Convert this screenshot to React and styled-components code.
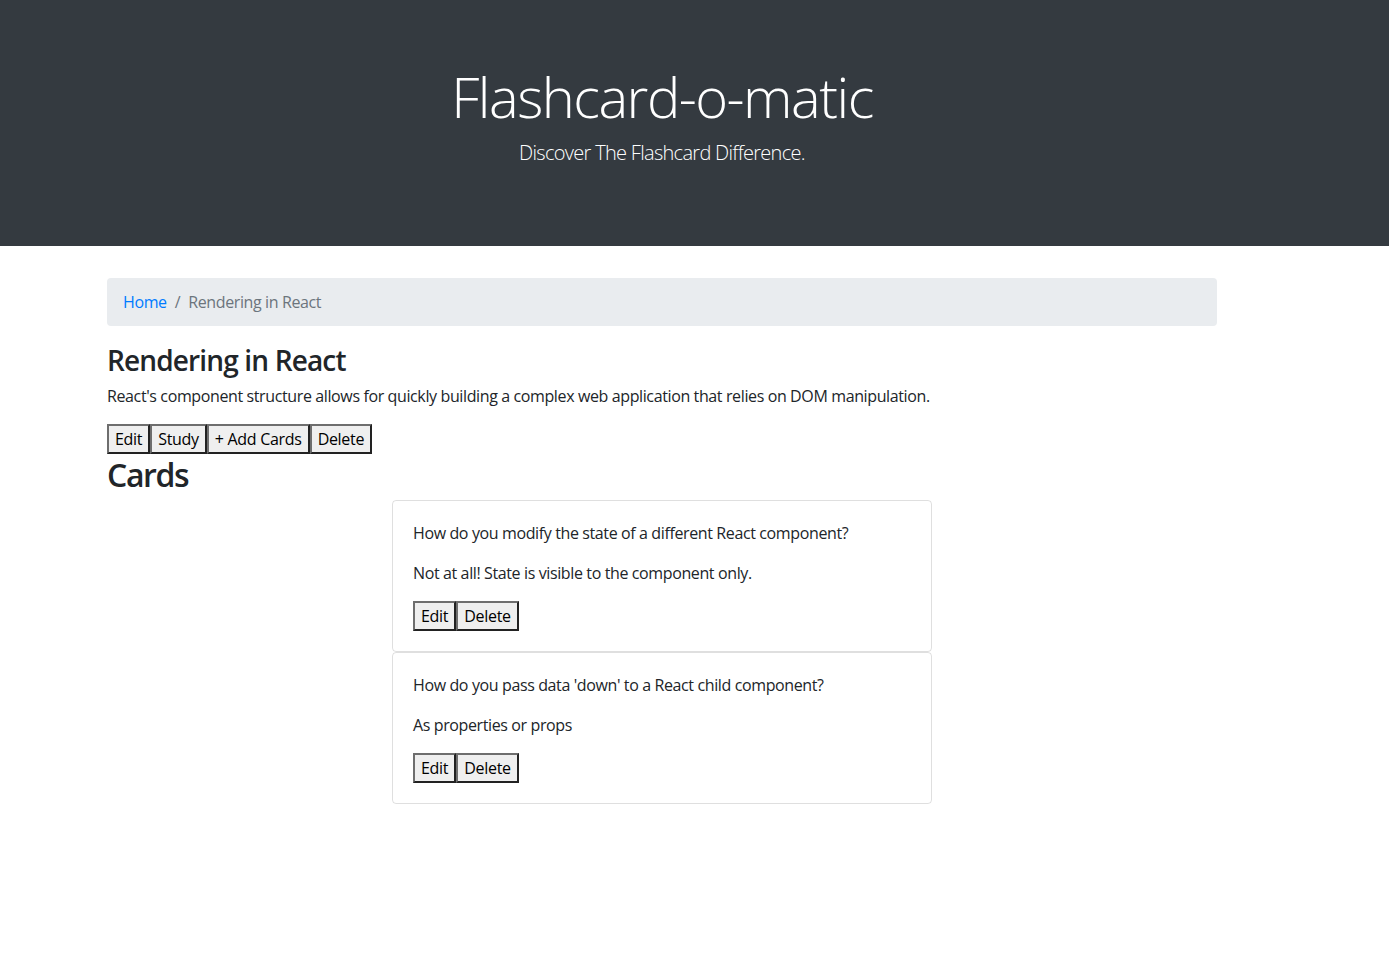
import styled, { createGlobalStyle } from "styled-components";

const GlobalStyle = createGlobalStyle`
  * { box-sizing: border-box; }
  body {
    margin: 0;
    font-family: "Open Sans", "Noto Sans", sans-serif;
    font-size: 16px;
    line-height: 1.5;
    letter-spacing: -0.38px;
    color: #212529;
    background: #fff;
  }
`;

const deck = {
  name: "Rendering in React",
  description:
    "React's component structure allows for quickly building a complex web application that relies on DOM manipulation.",
  cards: [
    {
      id: 1,
      front: "How do you modify the state of a different React component?",
      back: "Not at all! State is visible to the component only.",
    },
    {
      id: 2,
      front: "How do you pass data 'down' to a React child component?",
      back: "As properties or props",
    },
  ],
};

export default function App() {
  return (
    <>
      <GlobalStyle />
      <Jumbotron>
        <Page>
          <Title>Flashcard-o-matic</Title>
          <Lead>Discover The Flashcard Difference.</Lead>
        </Page>
      </Jumbotron>
      <Page>
        <Container>
          <Breadcrumb>
            <Crumb href="#">Home</Crumb>
            <Divider>/</Divider>
            <CurrentCrumb>{deck.name}</CurrentCrumb>
          </Breadcrumb>
          <DeckName>{deck.name}</DeckName>
          <Description>{deck.description}</Description>
          <ButtonRow>
            <Button>Edit</Button>
            <Button>Study</Button>
            <Button>+ Add Cards</Button>
            <Button>Delete</Button>
          </ButtonRow>
          <CardsHeading>Cards</CardsHeading>
          <CardList>
            {deck.cards.map((card) => (
              <Card key={card.id}>
                <CardText>{card.front}</CardText>
                <CardText>{card.back}</CardText>
                <ButtonRow>
                  <Button>Edit</Button>
                  <Button>Delete</Button>
                </ButtonRow>
              </Card>
            ))}
          </CardList>
        </Container>
      </Page>
    </>
  );
}

const Jumbotron = styled.header`
  background-color: #343a40;
  color: #fff;
  padding: 63px 0 78px;
  margin-bottom: 32px;
  text-align: center;
`;
const Page = styled.div`
  width: 1324px;
`;
const Title = styled.h1`
  margin: 0 0 8px;
  font-size: 56px;
  font-weight: 300;
  line-height: 1.2;
  letter-spacing: -1.5px;
`;
const Lead = styled.p`
  margin: 0;
  font-size: 20px;
  font-weight: 300;
  line-height: 1.5;
  letter-spacing: -0.7px;
`;
const Container = styled.main`
  width: 1110px;
  margin: 0 auto;
`;
const Breadcrumb = styled.nav`
  display: flex;
  align-items: center;
  height: 48px;
  padding: 0 16px;
  margin-bottom: 16px;
  background-color: #e9ecef;
  border-radius: 4px;
`;
const Crumb = styled.a`
  color: #007bff;
  text-decoration: none;
`;
const Divider = styled.span`
  color: #6c757d;
  padding: 0 8px;
`;
const CurrentCrumb = styled.span`
  color: #6c757d;
`;
const DeckName = styled.h3`
  margin: 0 0 6px;
  padding-top: 2px;
  font-size: 28px;
  font-weight: 600;
  line-height: 1.2;
  letter-spacing: -0.85px;
`;
const Description = styled.p`
  margin: 0 0 16px;
`;
const ButtonRow = styled.div`
  display: flex;
`;
const Button = styled.button`
  font-family: inherit;
  font-size: 16px;
  line-height: 1.5;
  letter-spacing: -0.3px;
  color: #000;
  background-color: #efefef;
  padding: 1px 6px;
  border: 2px solid;
  border-color: #6e6e6e #222 #222 #6e6e6e;
`;
const CardsHeading = styled.h2`
  margin: 0 0 6px;
  padding-top: 2px;
  font-size: 32px;
  font-weight: 600;
  line-height: 1.2;
  letter-spacing: -1.4px;
`;
const CardList = styled.div`
  display: flex;
  flex-direction: column;
  align-items: center;
`;
const Card = styled.section`
  width: 540px;
  padding: 20px;
  border: 1px solid rgba(0, 0, 0, 0.125);
  border-radius: 4px;
  p {
    margin: 0 0 16px;
  }
`;
const CardText = styled.p``;
